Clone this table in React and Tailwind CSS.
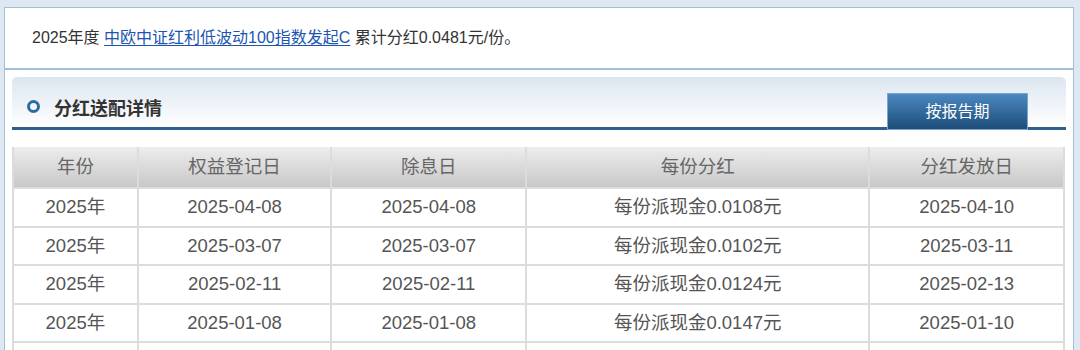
import React from 'react'

const rows = [
  ['2025年', '2025-04-08', '2025-04-08', '每份派现金0.0108元', '2025-04-10'],
  ['2025年', '2025-03-07', '2025-03-07', '每份派现金0.0102元', '2025-03-11'],
  ['2025年', '2025-02-11', '2025-02-11', '每份派现金0.0124元', '2025-02-13'],
  ['2025年', '2025-01-08', '2025-01-08', '每份派现金0.0147元', '2025-01-10'],
  ['', '', '', '', ''],
]

const headers = ['年份', '权益登记日', '除息日', '每份分红', '分红发放日']
const widths = ['w-[125px]', 'w-[194px]', 'w-[195px]', 'w-[344px]', 'w-[195px]']

export default function App() {
  return (
    <div
      className="w-[1080px] h-[350px] overflow-hidden bg-[#dde8f3] pt-[7px] pl-[4px]"
      style={{ fontFamily: '"Liberation Sans", "Noto Sans CJK SC", sans-serif' }}
    >
      <div className="w-[1070px] border border-[#9fc0d7] bg-white">
        {/* summary line */}
        <div className="flex h-[62px] items-center border-b-2 border-[#9fc0d7] pl-[27px] text-[16px] text-[#333]">
          <span>2025年度&nbsp;</span>
          <a href="#" className="text-[#1b55b0] underline underline-offset-2">中欧中证红利低波动100指数发起C</a>
          <span>&nbsp;累计分红0.0481元/份。</span>
        </div>

        <div className="pt-[7px] pl-[7px] pr-[7px]">
          {/* title bar */}
          <div className="flex h-[53px] items-end justify-between rounded-t-[5px] border-b-[3px] border-[#2f5f8b] bg-gradient-to-b from-[#dce6f0] to-white">
            <div className="flex h-full items-center gap-[14px] pl-[15px] pt-[14px]">
              <span className="h-[13px] w-[13px] -translate-y-[3px] rounded-full border-[3px] border-[#2c6c9c]" />
              <span className="text-[18px] font-bold text-[#333]">分红送配详情</span>
            </div>
            <div className="mr-[38px] mb-[-3px] flex h-[37px] w-[141px] items-center justify-center border border-[#7aa6d2] bg-gradient-to-b from-[#4b88c0] to-[#1d4e7a] text-[16px] text-white">
              按报告期
            </div>
          </div>

          {/* table */}
          <table className="mt-[17px] w-[1053px] border-collapse text-[18.5px]">
            <thead>
              <tr className="h-[41px] bg-gradient-to-b from-[#ededed] to-[#c7c7c7] text-[#666]">
                {headers.map((h, i) => (
                  <th key={i} className={`${widths[i]} border-x-2 border-[#dcdcdc] font-normal`}>{h}</th>
                ))}
              </tr>
            </thead>
            <tbody>
              {rows.map((r, i) => (
                <tr key={i} className="h-[38.5px] text-[#555]">
                  {r.map((c, j) => (
                    <td key={j} className="border-2 border-[#dcdcdc] text-center">{c}</td>
                  ))}
                </tr>
              ))}
            </tbody>
          </table>
        </div>
      </div>
    </div>
  )
}
